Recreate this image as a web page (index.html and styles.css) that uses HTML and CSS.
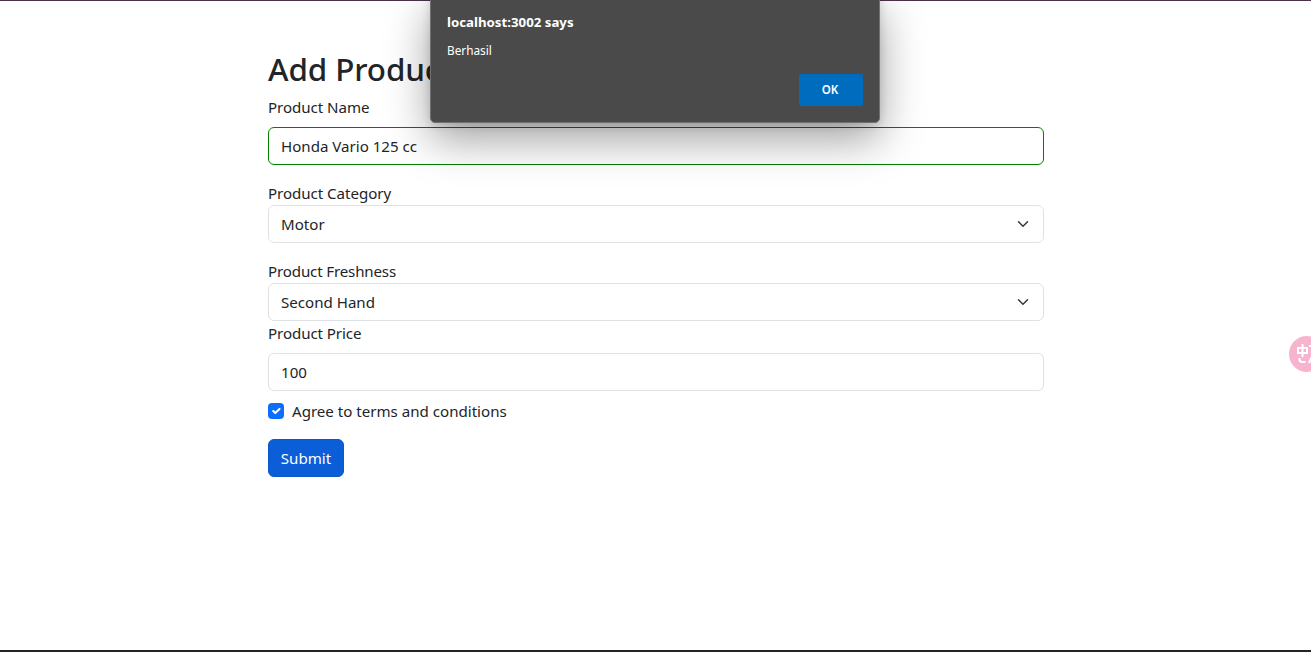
FILE: index.html
```html
<!DOCTYPE html>
<html lang="en">
<head>
<meta charset="utf-8">
<title>Add Product</title>
<link rel="stylesheet" href="styles.css">
</head>
<body>
<div class="page">
<main class="container">
  <h2 class="title">Add Product</h2>
  <form class="form">
    <div class="group">
      <label class="label spaced">Product Name</label>
      <div class="control valid"><span>Honda Vario 125 cc</span></div>
    </div>
    <div class="group">
      <label class="label">Product Category</label>
      <div class="control select"><span>Motor</span>
        <svg class="chevron" viewBox="0 0 16 16"><path d="m2 5 6 6 6-6"/></svg>
      </div>
    </div>
    <div class="group tight">
      <label class="label freshness">Product Freshness</label>
      <div class="control select"><span>Second Hand</span>
        <svg class="chevron" viewBox="0 0 16 16"><path d="m2 5 6 6 6-6"/></svg>
      </div>
    </div>
    <div class="group tight">
      <label class="label spaced price">Product Price</label>
      <div class="control"><span>100</span></div>
    </div>
    <div class="check">
      <span class="checkbox"><svg viewBox="0 0 20 20"><path d="m6 10 3 3 6-6"/></svg></span>
      <span class="agree">Agree to terms and conditions</span>
    </div>
    <button class="submit" type="button">Submit</button>
  </form>
</main>
</div>
<section class="dialog">
  <div class="dialog-title">localhost:3002 says</div>
  <div class="dialog-message">Berhasil</div>
  <button class="ok" type="button">OK</button>
</section>
<div class="translate">
  <svg width="36" height="36" viewBox="0 0 36 36"><path d="M9 12h9v5H9zM13.500 8v13M10.500 22v1.500q0 2.500 3 2.500h3M20 10h7M20 27l4-9 4 9"/></svg>
</div>
</body>
</html>
```
FILE: styles.css
```css
* { box-sizing: border-box; }
html { overflow: hidden; }
body {
  margin: 0;
  height: 652px;
  overflow: hidden;
  position: relative;
  background: #fff;
  color: #212529;
  font: 15.1px/24px "Noto Sans", "Open Sans", sans-serif;
}
.page {
  height: 652px;
  border-top: 1px solid #4b3049;
  border-bottom: 2px solid #252326;
}
.container { width: 776px; margin-left: 268px; padding-top: 48px; }
.title { margin: 0 0 8px; padding-top: 1px; height: 38.4px; font-size: 31.4px; line-height: 38.4px; font-weight: 500; letter-spacing: -.1px; white-space: nowrap; }
.form { display: flex; flex-direction: column; align-items: stretch; }
.group { display: flex; flex-direction: column; margin-bottom: 16px; }
.group.tight { margin-bottom: 0; }
.label { height: 24px; letter-spacing: -.04px; }
.label.freshness { letter-spacing: -.15px; }
.label.price { letter-spacing: -.08px; }
.spaced { margin-bottom: 8px; }
.control {
  height: 38px;
  padding: 0 12px;
  display: flex;
  align-items: center;
  justify-content: space-between;
  border: 1px solid #dee2e6;
  border-radius: 6px;
  background: #fff;
}
.valid { border-color: green; }
.chevron { width: 16px; height: 12px; fill: none; stroke: #343a40; stroke-width: 2; stroke-linecap: round; stroke-linejoin: round; }
.check { display: flex; align-items: center; gap: 8px; height: 24px; margin: 8px 0 16px; }
.checkbox { width: 16px; height: 16px; border-radius: 4px; background: #0d6efd; }
.checkbox svg { display: block; width: 14px; height: 14px; margin: 1px; fill: none; stroke: #fff; stroke-width: 3; stroke-linecap: round; stroke-linejoin: round; }
.submit {
  align-self: flex-start;
  width: 76px;
  height: 38px;
  padding: 0;
  border: 1px solid #0a58ca;
  border-radius: 6px;
  background: #0b5ed7;
  color: #fff;
  font: inherit;
}
.dialog {
  position: absolute;
  left: 430px;
  top: -6px;
  width: 450px;
  height: 129px;
  padding: 18px 16px 16px;
  display: flex;
  flex-direction: column;
  border: 1px solid #707070;
  border-radius: 5px;
  background: #4a4a4a;
  color: #fff;
  box-shadow: 0 16px 44px rgba(0, 0, 0, .38), 0 2px 8px rgba(0, 0, 0, .14);
}
.dialog-title { font-size: 13.25px; line-height: 18px; font-weight: 700; }
.dialog-message { margin-top: 10px; font-size: 11.8px; line-height: 18px; }
.ok {
  width: 64px;
  height: 32px;
  margin-top: auto;
  align-self: flex-end;
  border: 0;
  border-radius: 2px;
  background: #006cbe;
  color: #fff;
  font: 600 11.6px/18px "Noto Sans", sans-serif;
  padding: 0 8px 0 6px;
}
.translate {
  position: absolute;
  left: 1289px;
  top: 336px;
  width: 36px;
  height: 36px;
  border-radius: 50%;
  background: #f7b4ce;
}
.translate svg { display: block; fill: none; stroke: #fff; stroke-width: 2; }
```
